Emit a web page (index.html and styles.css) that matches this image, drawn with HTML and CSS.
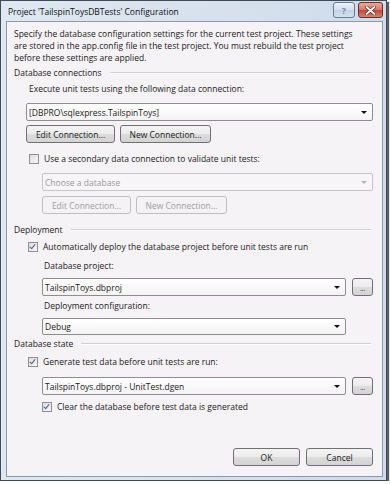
FILE: index.html
```html
<!DOCTYPE html>
<html lang="en">

<head>
    <meta charset="UTF-8">
    <meta name="viewport" content="width=device-width, initial-scale=1.0">
    <title>Project Configuration</title>
    <link rel="stylesheet" href="styles.css">
</head>

<body>
    <div class="window">
        <div class="titlebar">
            <span class="title">Project 'TailspinToysDBTests' Configuration</span>
            <div class="caption-buttons">
                <span class="cap-btn help">?</span>
                <span class="cap-btn close">
                    <svg width="11" height="9" viewBox="0 0 11 9">
                        <path d="M1.5 1 L9.5 8 M9.5 1 L1.5 8" stroke="#5a2a22" stroke-width="3.2" stroke-linecap="round" />
                        <path d="M1.5 1 L9.5 8 M9.5 1 L1.5 8" stroke="#ffffff" stroke-width="1.8" stroke-linecap="round" />
                    </svg>
                </span>
            </div>
        </div>

        <div class="client">
            <p class="intro">Specify the database configuration settings for the current test project. These settings are stored in the app.config file in the test project. You must rebuild the test project before these settings are applied.</p>

            <div class="group-title"><span>Database connections</span></div>
            <div class="label execute-label">Execute unit tests using the following data connection:</div>
            <div class="combo main-combo">
                <span>[DBPRO\sqlexpress.TailspinToys]</span>
                <i class="arrow"></i>
            </div>
            <div class="btn-row main-btns">
                <button class="btn btn-edit">Edit Connection...</button>
                <button class="btn btn-new">New Connection...</button>
            </div>
            <div class="check secondary-check">
                <span class="box"></span>
                <span>Use a secondary data connection to validate unit tests:</span>
            </div>
            <div class="combo sub-combo disabled">
                <span>Choose a database</span>
                <i class="arrow"></i>
            </div>
            <div class="btn-row sub-btns">
                <button class="btn btn-edit disabled">Edit Connection...</button>
                <button class="btn btn-new disabled">New Connection...</button>
            </div>

            <div class="group-title deploy-title"><span>Deployment</span></div>
            <div class="check deploy-check">
                <span class="box checked"></span>
                <span>Automatically deploy the database project before unit tests are run</span>
            </div>
            <div class="label sub-label project-label">Database project:</div>
            <div class="combo-row project-row">
                <div class="combo sub-combo">
                    <span>TailspinToys.dbproj</span>
                    <i class="arrow"></i>
                </div>
                <button class="btn dots">...</button>
            </div>
            <div class="label sub-label config-label">Deployment configuration:</div>
            <div class="combo-row config-row">
                <div class="combo sub-combo">
                    <span>Debug</span>
                    <i class="arrow"></i>
                </div>
                <span class="spacer"></span>
            </div>

            <div class="group-title state-title"><span>Database state</span></div>
            <div class="check generate-check">
                <span class="box checked"></span>
                <span>Generate test data before unit tests are run:</span>
            </div>
            <div class="combo-row dgen-row">
                <div class="combo sub-combo">
                    <span>TailspinToys.dbproj - UnitTest.dgen</span>
                    <i class="arrow"></i>
                </div>
                <button class="btn dots">...</button>
            </div>
            <div class="check clear-check">
                <span class="box checked"></span>
                <span>Clear the database before test data is generated</span>
            </div>

            <div class="footer">
                <button class="btn footer-btn">OK</button>
                <button class="btn footer-btn">Cancel</button>
            </div>
        </div>
    </div>
</body>

</html>
```

FILE: styles.css
```css
body {
    margin: 0;
    font-family: "Open Sans", sans-serif;
    font-size: 8.5px;
    color: #1a1a1a;
    background: #ffffff;
}

.window {
    box-sizing: border-box;
    width: 387px;
    height: 481px;
    border: 1px solid #3d4b59;
    padding: 0 3px 3px 5px;
    background: linear-gradient(to right, #dfe8f1, #cfdcea);
    box-shadow: 2px 2px 1px rgba(40, 40, 40, 0.75);
    display: flex;
    flex-direction: column;
}

.titlebar {
    height: 20px;
    display: flex;
    justify-content: space-between;
    align-items: flex-start;
}

.title {
    margin-left: 2px;
    line-height: 22px;
    color: #111;
}

.caption-buttons {
    display: flex;
    gap: 3px;
    padding-top: 1px;
}

.cap-btn {
    box-sizing: border-box;
    height: 16px;
    border: 1px solid #6b7a8c;
    border-radius: 3px;
    display: flex;
    align-items: center;
    justify-content: center;
}

.help {
    width: 22px;
    background: linear-gradient(#eef3f8, #d3dfeb 50%, #c3d2e2 51%, #d5e1ec);
    color: #7b8da3;
    font-weight: 700;
    font-size: 9px;
}

.close {
    width: 25px;
    border-color: #6e2f27;
    background: linear-gradient(#e8aa9e, #d47866 50%, #c2442f 51%, #d7826f);
}

.client {
    flex: 1;
    border: 1px solid #8a9bad;
    background: #f6f3f6;
    padding: 6px 9px 10px 7px;
    display: flex;
    flex-direction: column;
}

.intro {
    margin: 0;
    max-width: 350px;
    line-height: 12px;
}

.label,
.check,
.group-title {
    line-height: 12px;
    height: 12px;
    white-space: nowrap;
}

.group-title {
    display: flex;
    align-items: center;
    margin-top: 3px;
}

.group-title::after {
    content: '';
    flex: 1;
    height: 0;
    border-top: 1px solid #d2d0d4;
    border-bottom: 1px solid #ffffff;
    margin: 0 2px 0 8px;
}

.execute-label {
    margin: 4px 0 0 15px;
}

.combo {
    box-sizing: border-box;
    height: 18px;
    border: 1px solid #8e8e8e;
    border-radius: 2px;
    background: linear-gradient(#ffffff, #f3f3f3);
    display: flex;
    align-items: center;
    justify-content: space-between;
    padding: 0 5px 0 2px;
}

.arrow {
    width: 0;
    height: 0;
    border-left: 3px solid transparent;
    border-right: 3px solid transparent;
    border-top: 3px solid #111;
}

.main-combo {
    margin: 8px 0 0 12px;
}

.sub-combo {
    margin-left: 28px;
}

.combo.disabled {
    border-color: #c6c6c6;
    background: #f7f5f7;
    color: #9a9a9a;
}

.combo.disabled .arrow {
    border-top-color: #b5b5b5;
}

.btn-row {
    display: flex;
    gap: 5px;
}

.btn {
    box-sizing: border-box;
    height: 18px;
    padding: 0;
    border: 1px solid #707070;
    border-radius: 3px;
    background: linear-gradient(#f4f4f4, #ebebeb 50%, #dcdcdc 51%, #d4d4d4);
    font-family: inherit;
    font-size: inherit;
    color: #1a1a1a;
}

.btn.disabled {
    border-color: #c0bec2;
    background: #f4f2f4;
    color: #a0a0a0;
}

.btn-edit {
    width: 89px;
}

.btn-new {
    width: 91px;
}

.main-btns {
    margin: 4px 0 0 12px;
}

.secondary-check {
    margin: 10px 0 0 15px;
}

.check {
    display: flex;
    align-items: center;
    gap: 5px;
}

.box {
    box-sizing: border-box;
    width: 10px;
    height: 10px;
    border: 1px solid #8f8f8f;
    background: linear-gradient(135deg, #dcdcdc, #f8f8f8);
    position: relative;
}

.box.checked::after {
    content: '';
    position: absolute;
    left: 2px;
    top: 0px;
    width: 2px;
    height: 5px;
    border-right: 1.5px solid #4b5f8f;
    border-bottom: 1.5px solid #4b5f8f;
    transform: rotate(40deg);
}

.secondary-check + .sub-combo {
    margin-top: 8px;
}

.sub-btns {
    margin: 5px 0 0 28px;
}

.deploy-title {
    margin-top: 10px;
}

.deploy-check {
    margin: 5px 0 0 14px;
}

.sub-label {
    margin-left: 30px;
}

.project-label {
    margin-top: 7px;
}

.combo-row {
    display: flex;
    gap: 6px;
    align-items: center;
}

.combo-row .combo {
    flex: 1;
}

.dots {
    width: 21px;
    color: #555;
    letter-spacing: -0.5px;
}

.spacer {
    width: 21px;
}

.project-row {
    margin-top: 6px;
}

.config-label {
    margin-top: 4px;
}

.config-row {
    margin-top: 6px;
}

.config-row .combo {
    height: 17px;
}

.state-title {
    margin-top: 3px;
}

.generate-check {
    margin: 6px 0 0 14px;
}

.dgen-row {
    margin-top: 9px;
}

.clear-check {
    margin: 6px 0 0 28px;
}

.footer {
    margin-top: auto;
    display: flex;
    justify-content: flex-end;
    gap: 6px;
}

.footer-btn {
    width: 67px;
}
```
